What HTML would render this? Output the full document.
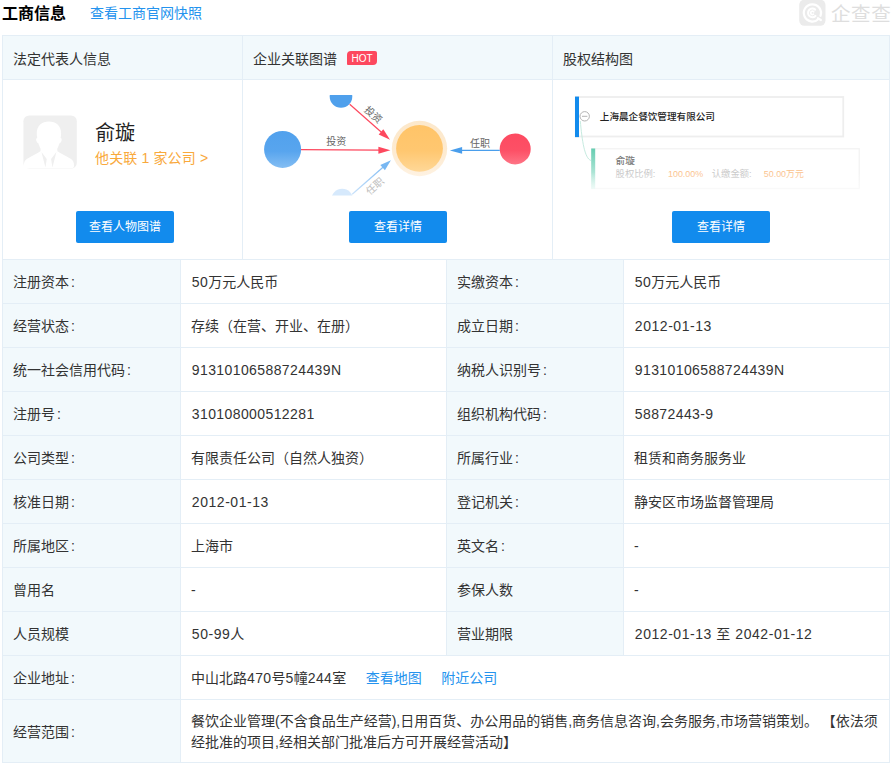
<!DOCTYPE html>
<html lang="zh-CN">
<head>
<meta charset="utf-8">
<title>工商信息</title>
<style>
*{box-sizing:border-box}
html,body{margin:0;padding:0;background:#fff}
body{width:892px;height:765px;position:relative;overflow:hidden;font-family:"Liberation Sans","Noto Sans CJK SC",sans-serif;font-size:14px;color:#333;line-height:21px}
a{text-decoration:none;color:#128bed}
.abs{position:absolute}
.title{position:absolute;left:2px;top:2px;height:24px;line-height:24px;font-size:16px;font-weight:bold;color:#000;white-space:nowrap}
.snap{position:absolute;left:90px;top:2px;height:22px;line-height:22px;font-size:14px;color:#2493ee;white-space:nowrap}
.wm{position:absolute;left:799px;top:0;width:93px;height:26px}
.wm .logo{position:absolute;left:0;top:0;width:28px;height:27px}
.wm .txt{position:absolute;left:32px;top:1px;font-size:19.500px;line-height:26px;color:#dedede;font-weight:400;letter-spacing:0.600px;white-space:nowrap}
table{border-collapse:collapse;table-layout:fixed;position:absolute;left:2px;width:887px;margin:0}
td,th{border:1px solid #e4eef6;padding:2px 10px 0;vertical-align:middle;text-align:left;font-weight:normal;overflow:hidden}
#t1{top:35px}
#t1 th{height:44px;padding-top:4px;background:#f2f9fc;color:#333}
#t1 td{height:180px;padding:0;position:relative;vertical-align:top}
#t2{top:259px}
#t2 td{height:44px}
#t2 td.tb{background:#f2f9fc}
#t2 tr.last td{height:63px}
.hot{display:inline-block;background:#fd485e;color:#fff;font-size:10px;line-height:16px;height:14px;width:30px;text-align:center;padding:0;border-radius:4px 2px 4px 1px;margin-left:10px;vertical-align:0px;position:relative;top:-2px;font-family:"Liberation Sans",sans-serif}
.btn{position:absolute;top:131px;width:98px;height:32px;line-height:32px;background:#128bed;color:#fff;font-size:12px;text-align:center;border-radius:2px}
.avatar{position:absolute;left:20px;top:35px;width:55px;height:55px}
.pname{position:absolute;left:92px;top:38.500px;font-size:20px;line-height:28px;color:#222;white-space:nowrap}
.prel{position:absolute;left:92px;top:68px;letter-spacing:.15px;font-size:14px;line-height:21px;color:#f9a93c;white-space:nowrap}
.lnk{color:#2493ee;margin-left:19.500px}
.n{letter-spacing:.4px}
.d{letter-spacing:.55px}
td.n,td.d{padding-left:10.800px}
.f{margin-left:.800px}
i{font-style:normal;margin-left:2px}
</style>
</head>
<body>
<div class="title">工商信息</div>
<a class="snap">查看工商官网快照</a>
<div class="wm">
<svg class="logo" width="28" height="27" viewBox="-0.2 0.3 28 27"><rect width="26.300" height="26.100" rx="5.200" fill="#ebebeb"/><g fill="none" stroke="#fff" stroke-linecap="round"><path d="M19.280 19.280A8.600 8.600 0 1 1 21.280 16.140" stroke-width="2.200"/><path d="M18.700 18.500L21.700 20.300" stroke-width="2.200"/><path d="M16.240 16.240A4.300 4.300 0 1 1 15.960 9.910" stroke-width="2.100"/><path d="M14.300 14.500A1.700 1.700 0 1 1 14.500 12.100" stroke-width="1.700"/></g></svg>
<div class="txt">企查查</div>
</div>

<table id="t1">
<colgroup><col style="width:240px"><col style="width:310px"><col style="width:337px"></colgroup>
<tr><th>法定代表人信息</th><th>企业关联图谱<span class="hot">HOT</span></th><th>股权结构图</th></tr>
<tr>
<td>
<svg class="avatar" viewBox="-0.42 -0.38 55.62 55.62"><rect width="54" height="54" rx="6" fill="#efefef"/>
<path fill="#fff" d="M25.8 6.3C33.0 6.3 38.1 10.6 38.1 18.0C38.1 19.8 38.0 21.5 37.6 22.9C38.6 23.0 38.9 24.0 38.6 25.3C38.2 26.8 37.5 27.9 36.5 28.1C35.7 30.5 35.0 32.2 34.2 33.7L34.4 36.2C37.8 38.4 42.8 40.8 48.2 44.2C50.4 45.6 51.2 47.8 51.2 50.9C51.2 52.6 50.2 53.7 48.3 53.7L3.3 53.7C1.4 53.7 0.4 52.6 0.4 50.9C0.4 47.8 1.2 45.6 3.4 44.2C8.8 40.8 13.8 38.4 17.2 36.2L17.4 33.7C16.6 32.2 15.9 30.5 15.1 28.1C14.1 27.9 13.4 26.8 13.0 25.3C12.7 24.0 13.0 23.0 14.0 22.9C13.6 21.5 13.5 19.8 13.5 18.0C13.5 10.6 18.6 6.3 25.8 6.3z"/>
<path fill="#efefef" d="M18.250 37.100l5.350 7.100-1.350 8.500zM33.350 37.100l-5.350 7.100 1.350 8.500z"/></svg>
<div class="pname">俞璇</div>
<a class="prel">他关联 1 家公司 &gt;</a>
<a class="btn" style="left:73px">查看人物图谱</a>
</td>
<td>
<svg class="abs" style="left:0;top:0" width="309" height="179" viewBox="243 80 309 179">
<defs>
<linearGradient id="gb" x1="0" y1="0" x2="0" y2="1"><stop offset="0" stop-color="#51a1ed"/><stop offset=".55" stop-color="#58a5ee"/><stop offset="1" stop-color="#84bef3"/></linearGradient>
<linearGradient id="gh" x1="0" y1="0" x2="0" y2="1"><stop offset="0" stop-color="#fce8cb"/><stop offset=".6" stop-color="#fdebd2"/><stop offset="1" stop-color="#fef2e2"/></linearGradient>
<linearGradient id="go" x1="0" y1="0" x2="0" y2="1"><stop offset="0" stop-color="#ffc468"/><stop offset=".55" stop-color="#ffc770"/><stop offset="1" stop-color="#ffd898"/></linearGradient>
<linearGradient id="gr" x1="0" y1="0" x2="0" y2="1"><stop offset="0" stop-color="#fd4a61"/><stop offset=".55" stop-color="#fd5066"/><stop offset="1" stop-color="#fe7586"/></linearGradient>
<linearGradient id="gl" gradientUnits="userSpaceOnUse" x1="0" y1="160" x2="0" y2="196"><stop offset="0" stop-color="#6fb2f1"/><stop offset="1" stop-color="#cfe5fb"/></linearGradient>
<clipPath id="gc"><rect x="250" y="95" width="296" height="100.600"/></clipPath>
</defs>
<g clip-path="url(#gc)">
<circle cx="282.600" cy="149.450" r="18.500" fill="url(#gb)"/>
<circle cx="341" cy="96.500" r="11.300" fill="#4fa0ec"/>
<circle cx="342.200" cy="199.800" r="11" fill="#d6e9fc"/>
<circle cx="419.500" cy="148.500" r="27.700" fill="url(#gh)"/>
<circle cx="419.500" cy="148.400" r="23.400" fill="url(#go)"/>
<circle cx="515.200" cy="148.900" r="15.500" fill="url(#gr)"/>
<path d="M301 149.700L380 150.200" stroke="#fd485e" stroke-width="1.200" fill="none"/>
<path d="M390.400 150.200L378.400 146.700L378.400 153.800z" fill="#fd485e"/>
<path d="M349.700 104.300L382 132.800" stroke="#fd485e" stroke-width="1.200" fill="none"/>
<path d="M390 139.800L378.700 134.500L383.300 129.300z" fill="#fd485e"/>
<path d="M352.200 194.300L383 167.200" stroke="url(#gl)" stroke-width="1.200" fill="none"/>
<path d="M390.900 160.300L384.900 170.200L380.300 165z" fill="#78b7f2"/>
<path d="M499.800 150.400L461 150.400" stroke="#4a9eec" stroke-width="1.200" fill="none"/>
<path d="M449.900 150.400L462.100 147L462.100 153.800z" fill="#4a9eec"/>
<g font-size="10" text-anchor="middle" fill="#666">
<text x="336.200" y="145.200">投资</text>
<text transform="translate(373.500 114.400) rotate(41.400)" y="3.800">投资</text>
<text transform="translate(374.700 186) rotate(-41.300)" y="3.800" fill="#bdbdbd">任职</text>
<text x="479.900" y="146.600">任职</text>
</g>
</g>
</svg>
<a class="btn" style="left:106px">查看详情</a>
</td>
<td>
<svg class="abs" style="left:0;top:0" width="336" height="179" viewBox="553 80 336 179">
<defs>
<linearGradient id="gw" x1="0" y1="0" x2="0" y2="1"><stop offset="0" stop-color="#fff" stop-opacity="0"/><stop offset="1" stop-color="#fff" stop-opacity=".6"/></linearGradient>
<linearGradient id="gg" x1="0" y1="0" x2="0" y2="1"><stop offset="0" stop-color="#66cdb1"/><stop offset="1" stop-color="#dcf5ee"/></linearGradient>
</defs>
<rect x="575.750" y="97" width="267.500" height="39.500" fill="#fff" stroke="#eeeeee" stroke-width="1.800"/>
<rect x="575" y="96.600" width="4" height="40.500" fill="#128bed"/>
<path d="M580.300 121C582 140 584.500 158.500 591 160.500" fill="none" stroke="#c6ebe0" stroke-width="1"/>
<circle cx="584.700" cy="116.300" r="4.700" fill="#fff" stroke="#b4b4b4" stroke-width="1"/>
<path d="M582 116.300H587.400" stroke="#b4b4b4" stroke-width="1"/>
<text x="599.800" y="119.900" font-size="9.600" font-weight="500" fill="#222">上海晨企餐饮管理有限公司</text>
<rect x="591.750" y="148.750" width="267.500" height="39.800" fill="#fff" stroke="#f3f3f3" stroke-width="1.300"/>
<rect x="591.200" y="148.500" width="4" height="40.500" fill="url(#gg)"/>
<text x="615.600" y="163.800" font-size="9.600" font-weight="500" fill="#777">俞璇</text>
<g font-size="9.300">
<text x="615.600" y="176.900" fill="#c8c8c8">股权比例:</text>
<text x="668" y="176.900" fill="#fbc28c" font-size="9.200" textLength="35.200" lengthAdjust="spacingAndGlyphs">100.00%</text>
<text x="711.800" y="176.900" fill="#c8c8c8">认缴金额:</text>
<text x="763.800" y="176.900" fill="#fbc28c" textLength="40" lengthAdjust="spacingAndGlyphs">50.00万元</text>
</g>
<rect x="590" y="172" width="272" height="19" fill="url(#gw)"/>
</svg>
<a class="btn" style="left:119px">查看详情</a>
</td>
</tr>
</table>

<table id="t2">
<colgroup><col style="width:178px"><col style="width:266px"><col style="width:177px"><col style="width:266px"></colgroup>
<tr><td class="tb">注册资本<i>:</i></td><td><span class="n f">50</span>万元人民币</td><td class="tb">实缴资本<i>:</i></td><td><span class="n f">50</span>万元人民币</td></tr>
<tr><td class="tb">经营状态<i>:</i></td><td>存续（在营、开业、在册）</td><td class="tb">成立日期<i>:</i></td><td class="d">2012-01-13</td></tr>
<tr><td class="tb">统一社会信用代码<i>:</i></td><td class="n">91310106588724439N</td><td class="tb">纳税人识别号<i>:</i></td><td class="n">91310106588724439N</td></tr>
<tr><td class="tb">注册号<i>:</i></td><td class="n">310108000512281</td><td class="tb">组织机构代码<i>:</i></td><td class="n">58872443-9</td></tr>
<tr><td class="tb">公司类型<i>:</i></td><td>有限责任公司（自然人独资）</td><td class="tb">所属行业<i>:</i></td><td>租赁和商务服务业</td></tr>
<tr><td class="tb">核准日期<i>:</i></td><td class="d">2012-01-13</td><td class="tb">登记机关<i>:</i></td><td>静安区市场监督管理局</td></tr>
<tr><td class="tb">所属地区<i>:</i></td><td>上海市</td><td class="tb">英文名<i>:</i></td><td>-</td></tr>
<tr><td class="tb">曾用名</td><td>-</td><td class="tb">参保人数</td><td>-</td></tr>
<tr><td class="tb">人员规模</td><td><span class="d f">50-99</span>人</td><td class="tb">营业期限</td><td class="d">2012-01-13 至 2042-01-12</td></tr>
<tr><td class="tb">企业地址<i>:</i></td><td colspan="3">中山北路<span class="n">470</span>号<span class="n">5</span>幢<span class="n">244</span>室<a class="lnk">查看地图</a><a class="lnk">附近公司</a></td></tr>
<tr class="last"><td class="tb">经营范围<i>:</i></td><td colspan="3">餐饮企业管理(不含食品生产经营),日用百货、办公用品的销售,商务信息咨询,会务服务,市场营销策划。 【依法须经批准的项目,经相关部门批准后方可开展经营活动】</td></tr>
</table>
</body>
</html>
